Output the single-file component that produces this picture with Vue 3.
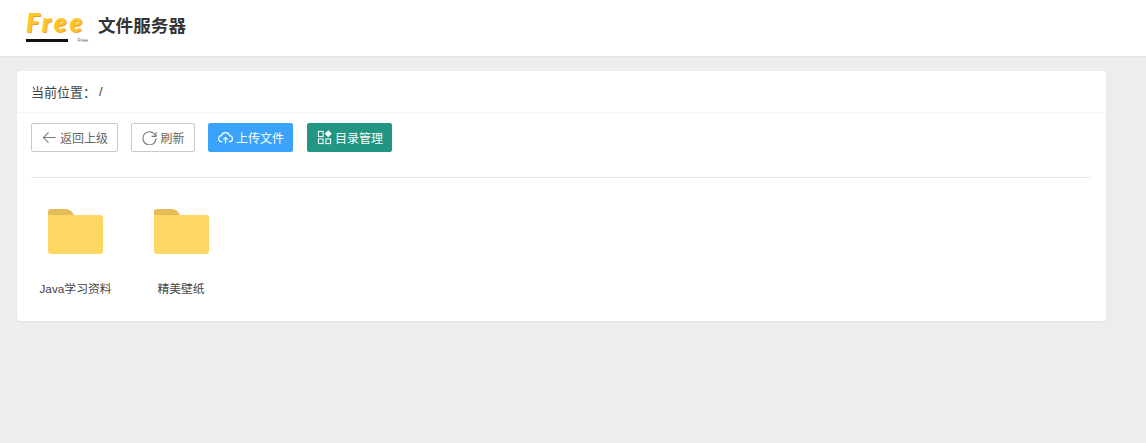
<script setup>
const folders = ['Java学习资料', '精美壁纸']
</script>

<template>
  <div class="page">
    <header class="header">
      <div class="logo">
        <span class="logo-word">Free</span>
        <div class="logo-sub">
          <i class="logo-line"></i>
          <span class="logo-small">Free</span>
        </div>
      </div>
      <h1 class="title">文件服务器</h1>
    </header>

    <main class="card">
      <div class="crumb">当前位置：<span class="slash">/</span></div>

      <div class="body">
        <div class="toolbar">
          <button class="btn plain back">
            <svg class="ico" viewBox="0 0 16 16" fill="none" stroke="#777" stroke-width="1.1">
              <path d="M14.5 8H1.5M7 2.5L1.5 8L7 13.5" />
            </svg>
            返回上级
          </button>
          <button class="btn plain refresh">
            <svg class="ico" viewBox="0 0 16 16" fill="none" stroke="#777" stroke-width="1.1">
              <path d="M14.6 6.5A7 7 0 1 0 15 9" />
              <path d="M15 2.2V6.8H10.4" />
            </svg>
            刷新
          </button>
          <button class="btn blue">
            <svg class="ico" viewBox="0 0 16 16" fill="none" stroke="#fff" stroke-width="1.3">
              <path d="M4.6 12.5H4A3.2 3.2 0 0 1 3.6 6.1A4.6 4.6 0 0 1 12.4 6.1A3.2 3.2 0 0 1 12 12.5H11.4" />
              <path d="M8 14.5V8M5.6 10.2L8 7.8L10.4 10.2" />
            </svg>
            上传文件
          </button>
          <button class="btn green">
            <svg class="ico" viewBox="0 0 16 16" fill="none" stroke="#fff" stroke-width="1.1">
              <rect x="1.5" y="1.5" width="5" height="5.5" />
              <rect x="1.5" y="9.5" width="5" height="5" />
              <rect x="9.5" y="9.5" width="5" height="5" />
              <path d="M12 1L15 4L12 7L9 4Z" fill="#fff" />
            </svg>
            目录管理
          </button>
        </div>

        <hr class="rule" />

        <div class="folders">
          <div v-for="name in folders" :key="name" class="folder">
            <svg class="folder-ico" viewBox="0 0 55 45">
              <path d="M0 14V3Q0 0 3 0H18Q23 0 26 6H0Z" fill="#e5bc57" />
              <path d="M0 6H52Q55 6 55 9V42Q55 45 52 45H3Q0 45 0 42Z" fill="#fdd663" />
            </svg>
            <span class="folder-name">{{ name }}</span>
          </div>
        </div>
      </div>
    </main>
  </div>
</template>

<style>
html,
body {
  margin: 0;
  background: #ededed;
}
</style>

<style scoped>
.page {
  min-height: 443px;
  background: #ededed;
  font-family: "Liberation Sans", "Noto Sans CJK SC", sans-serif;
  color: #333;
}

.header {
  height: 56px;
  display: flex;
  align-items: center;
  padding-left: 26px;
  background: #fff;
  border-bottom: 1px solid #e6e6e6;
}

.logo {
  width: 62px;
  display: flex;
  flex-direction: column;
  margin-right: 10px;
  margin-top: -4px;
}

.logo-word {
  height: 26px;
  font-family: "Lato", sans-serif;
  font-size: 26px;
  line-height: 26px;
  font-weight: 900;
  font-style: italic;
  letter-spacing: 3px;
  white-space: nowrap;
  color: #fdc52c;
  text-shadow: 1px 1px 0 #f4a21f;
}

.logo-sub {
  display: flex;
  align-items: center;
  justify-content: space-between;
  margin-top: 2px;
}

.logo-line {
  width: 42px;
  height: 3px;
  background: #111;
}

.logo-small {
  font-size: 5px;
  line-height: 6px;
  color: #666;
}

.title {
  margin: 0;
  padding-bottom: 8px;
  font-size: 17.6px;
  font-weight: 700;
  color: #333;
}

.card {
  margin: 14px 40px 0 17px;
  height: 250px;
  box-sizing: border-box;
  background: #fff;
  border-radius: 3px;
  box-shadow: 0 1px 2px rgba(0, 0, 0, 0.05);
}

.crumb {
  height: 42px;
  box-sizing: border-box;
  padding-left: 14px;
  display: flex;
  align-items: center;
  font-size: 13px;
  color: #444;
  border-bottom: 1px solid #f6f6f6;
}

.slash {
  margin-left: 3px;
}

.body {
  padding: 10px 15px 0 14px;
}

.toolbar {
  display: flex;
  gap: 13px;
}

.btn {
  height: 29px;
  box-sizing: border-box;
  display: flex;
  align-items: center;
  justify-content: center;
  gap: 3px;
  padding: 0 0 1px 1px;
  border-radius: 2px;
  font-family: inherit;
  font-size: 12px;
  white-space: nowrap;
}

.ico {
  width: 15px;
  height: 15px;
  flex: none;
}

.plain {
  background: #fff;
  border: 1px solid #c9c9c9;
  color: #666;
}

.back {
  width: 87px;
}

.refresh {
  width: 64px;
}

.blue {
  width: 85px;
  margin-right: 1px;
  background: #3aa2fb;
  border: 1px solid #3aa2fb;
  color: #fff;
}

.green {
  width: 85px;
  background: #229682;
  border: 1px solid #229682;
  color: #fff;
}

.rule {
  margin: 25px 0 0;
  border: 0;
  border-top: 1px solid #e6e6e6;
}

.folders {
  display: flex;
  gap: 24.5px;
  margin-top: 31px;
  padding-left: 4px;
}

.folder {
  width: 81px;
  display: flex;
  flex-direction: column;
  align-items: center;
}

.folder-ico {
  width: 55px;
  height: 45px;
}

.folder-name {
  margin-top: 27px;
  font-size: 11.8px;
  line-height: 16px;
  color: #444;
}
</style>
